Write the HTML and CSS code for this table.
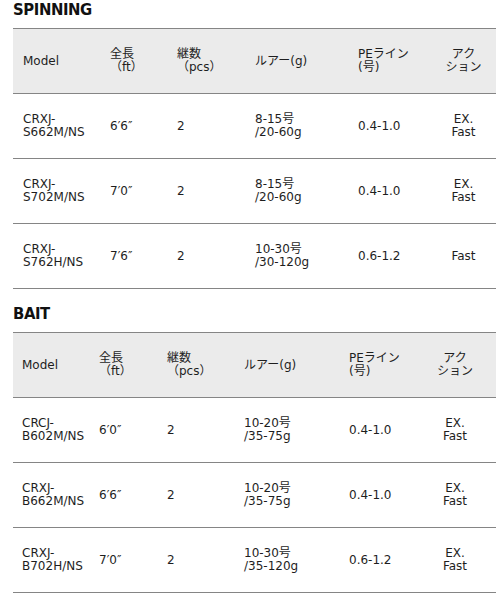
FILE: index.html
```html
<!DOCTYPE html>
<html lang="ja">
<head>
<meta charset="utf-8">
<link rel="stylesheet" href="styles.css">
</head>
<body>
<section class="section">
  <h2 class="title">SPINNING</h2>
  <table class="spec spec-spin">
    <colgroup>
      <col class="c-model"><col class="c-len"><col class="c-pcs"><col class="c-lure"><col class="c-pe"><col class="c-act">
    </colgroup>
    <thead>
      <tr>
        <th>Model</th>
        <th>全長<br>（ft）</th>
        <th>継数<br>（pcs）</th>
        <th>ルアー(g)</th>
        <th>PEライン<br>(号)</th>
        <th class="act">アク<br>ション</th>
      </tr>
    </thead>
    <tbody>
      <tr>
        <td>CRXJ-<br>S662M/NS</td>
        <td>6′6″</td>
        <td>2</td>
        <td>8-15号<br>/20-60g</td>
        <td>0.4-1.0</td>
        <td class="act">EX.<br>Fast</td>
      </tr>
      <tr>
        <td>CRXJ-<br>S702M/NS</td>
        <td>7′0″</td>
        <td>2</td>
        <td>8-15号<br>/20-60g</td>
        <td>0.4-1.0</td>
        <td class="act">EX.<br>Fast</td>
      </tr>
      <tr>
        <td>CRXJ-<br>S762H/NS</td>
        <td>7′6″</td>
        <td>2</td>
        <td>10-30号<br>/30-120g</td>
        <td>0.6-1.2</td>
        <td class="act">Fast</td>
      </tr>
    </tbody>
  </table>
</section>
<section class="section">
  <h2 class="title">BAIT</h2>
  <table class="spec spec-bait">
    <colgroup>
      <col class="c-model"><col class="c-len"><col class="c-pcs"><col class="c-lure"><col class="c-pe"><col class="c-act">
    </colgroup>
    <thead>
      <tr>
        <th>Model</th>
        <th>全長<br>（ft）</th>
        <th>継数<br>（pcs）</th>
        <th>ルアー(g)</th>
        <th>PEライン<br>(号)</th>
        <th class="act">アク<br>ション</th>
      </tr>
    </thead>
    <tbody>
      <tr>
        <td>CRCJ-<br>B602M/NS</td>
        <td>6′0″</td>
        <td>2</td>
        <td>10-20号<br>/35-75g</td>
        <td>0.4-1.0</td>
        <td class="act">EX.<br>Fast</td>
      </tr>
      <tr>
        <td>CRXJ-<br>B662M/NS</td>
        <td>6′6″</td>
        <td>2</td>
        <td>10-20号<br>/35-75g</td>
        <td>0.4-1.0</td>
        <td class="act">EX.<br>Fast</td>
      </tr>
      <tr>
        <td>CRXJ-<br>B702H/NS</td>
        <td>7′0″</td>
        <td>2</td>
        <td>10-30号<br>/35-120g</td>
        <td>0.6-1.2</td>
        <td class="act">EX.<br>Fast</td>
      </tr>
    </tbody>
  </table>
</section>
</body>
</html>
```

FILE: styles.css
```css
html, body {
  margin: 0;
  padding: 0;
  background: #fff;
}
body {
  width: 496px;
  overflow: hidden;
  font-family: "DejaVu Sans", "Noto Sans CJK JP", sans-serif;
  color: #1e1e1e;
}
.section {
  padding-left: 13px;
}
.section + .section {
  margin-top: 15px;
}
.title {
  margin: 0 0 9px;
  font-family: "DejaVu Sans Condensed", "DejaVu Sans", sans-serif;
  font-stretch: condensed;
  font-weight: bold;
  font-size: 16.5px;
  line-height: 19px;
  color: #111;
  letter-spacing: -0.4px;
}
.spec {
  table-layout: fixed;
  width: 483px;
  border-collapse: separate;
  border-spacing: 0;
  border-top: 1px solid #858585;
  font-size: 12px;
  line-height: 13px;
}
.spec th,
.spec td {
  height: 64px;
  padding: 0 0 0 10px;
  text-align: left;
  vertical-align: middle;
  font-weight: normal;
  border-bottom: 1px solid #858585;
  white-space: nowrap;
}
.spec thead th {
  background: #ebebeb;
}
.spec .act {
  text-align: center;
  padding: 0;
}
.spec-spin .c-model { width: 87px; }
.spec-spin .c-len { width: 67px; }
.spec-spin .c-pcs { width: 78px; }
.spec-spin .c-lure { width: 103px; }
.spec-spin .c-pe { width: 83px; }
.spec-spin .c-act { width: 65px; }

.spec-bait .c-model { width: 77px; }
.spec-bait .c-len { width: 68px; }
.spec-bait .c-pcs { width: 77px; }
.spec-bait .c-lure { width: 105px; }
.spec-bait .c-pe { width: 82px; }
.spec-bait .c-act { width: 74px; }
.spec-bait th, .spec-bait td { padding-left: 9px; }
.spec-bait .act { padding-left: 0; padding-right: 8px; }
```
